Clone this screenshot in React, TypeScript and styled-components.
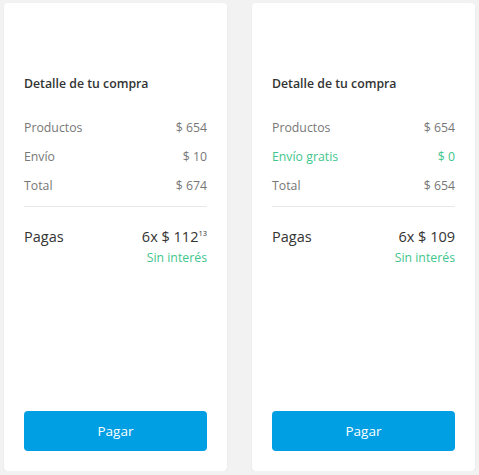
import React from 'react';
import styled, { createGlobalStyle } from 'styled-components';

const GlobalStyle = createGlobalStyle`
  html, body {
    margin: 0;
    padding: 0;
    background: #f2f2f2;
  }
  body {
    font-family: "Open Sans", "Liberation Sans", sans-serif;
    -webkit-font-smoothing: antialiased;
  }
`;

const Board = styled.div`
  display: grid;
  grid-template-columns: 223px 223px;
  gap: 25px;
  padding: 3px 4px 0;
  height: 468px;
`;

const Card = styled.div`
  display: flex;
  flex-direction: column;
  background: #fff;
  border-radius: 4px;
  box-shadow: 0 1px 2px rgba(0, 0, 0, 0.08);
  padding: 73px 20px 20px;
`;

const Title = styled.h3`
  margin: 0;
  font-size: 12.3px;
  line-height: 16px;
  font-weight: 600;
  color: #333;
`;

const Rows = styled.div`
  margin-top: 21px;
  padding-bottom: 6px;
  border-bottom: 1px solid #e8e8e8;
`;

const Row = styled.div<{ $green?: boolean }>`
  display: flex;
  justify-content: space-between;
  height: 29px;
  line-height: 30px;
  font-size: 12.3px;
  color: ${(p) => (p.$green ? '#3fc68e' : '#777')};
`;

const Total = styled.div`
  display: flex;
  justify-content: space-between;
  margin-top: 20px;
  font-size: 14.5px;
  line-height: 20px;
  color: #333;
`;

const Cents = styled.sup`
  font-size: 7.5px;
  vertical-align: top;
  line-height: 12px;
`;

const Note = styled.div`
  text-align: right;
  font-size: 12.3px;
  line-height: 18px;
  margin-top: 2px;
  color: #3fc68e;
`;

const PayButton = styled.button`
  margin-top: auto;
  height: 40px;
  border: none;
  border-radius: 4px;
  background: #009ee3;
  color: #fff;
  font-family: inherit;
  font-size: 13.5px;
  cursor: pointer;
`;

interface Line {
  label: string;
  value: string;
  green?: boolean;
}

const Summary: React.FC<{ lines: Line[]; amount: string; cents?: string }> = ({ lines, amount, cents }) => (
  <Card>
    <Title>Detalle de tu compra</Title>
    <Rows>
      {lines.map((l) => (
        <Row key={l.label} $green={l.green}>
          <span>{l.label}</span>
          <span>{l.value}</span>
        </Row>
      ))}
    </Rows>
    <Total>
      <span>Pagas</span>
      <span>
        {amount}
        {cents && <Cents>{cents}</Cents>}
      </span>
    </Total>
    <Note>Sin interés</Note>
    <PayButton>Pagar</PayButton>
  </Card>
);

export default function App() {
  return (
    <>
      <GlobalStyle />
      <Board>
        <Summary
          lines={[
            { label: 'Productos', value: '$ 654' },
            { label: 'Envío', value: '$ 10' },
            { label: 'Total', value: '$ 674' },
          ]}
          amount="6x $ 112"
          cents="13"
        />
        <Summary
          lines={[
            { label: 'Productos', value: '$ 654' },
            { label: 'Envío gratis', value: '$ 0', green: true },
            { label: 'Total', value: '$ 654' },
          ]}
          amount="6x $ 109"
        />
      </Board>
    </>
  );
}
